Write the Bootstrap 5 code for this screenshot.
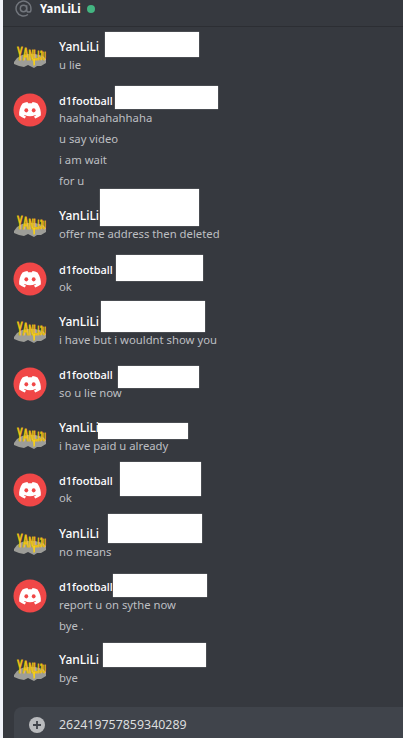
<!DOCTYPE html>
<html lang="en"><head><meta charset="utf-8">
<link rel="stylesheet" href="https://cdn.jsdelivr.net/npm/bootstrap@5.3.0/dist/css/bootstrap.min.css">
<style>
html,body{height:738px;overflow:hidden;background:#f1f3f9}
body{font-family:"Noto Sans",sans-serif;font-size:11.3px;color:#dcddde;padding-left:3px}
.chat-shell{height:738px;background:#36393f;overflow:hidden}
.chat-head{height:27px;padding:0 0 9px 12px;border-bottom:1px solid #2c2e33;font-size:11.5px}
.at-mark{width:17px;height:17px}
.head-name{font-weight:700;color:#fff;margin-left:8px}
.online-dot{width:8px;height:8px;border-radius:50%;background:#43b581;margin-left:6px}
.msg-list{padding:11px 0 0 10px}
.msg-group{position:relative;padding:0 0 17px 46px}
.pad-more{padding-bottom:18px}
.pad-less{padding-bottom:16px}
.avatar-slot{position:absolute;left:0;top:1px;width:34px;height:34px}
.user-name{height:18px;line-height:18px;color:#fff;font-weight:500;font-size:12px}
.name-alt{font-size:11px}
.name-short{height:17px}
.msg-line{height:18px;line-height:18px;color:#bdbfc2}
.msg-line+.msg-line{height:21px;line-height:24px}
.mask{position:absolute;background:#fff;box-shadow:0 0 1px rgba(255,255,255,.6)}
.m1{left:92px;top:-6px;width:94px;height:25px}
.m2{left:102px;top:-6px;width:103px;height:23px}
.m3{left:87px;top:-18px;width:99px;height:37px}
.m4{left:103px;top:-6px;width:87px;height:26px}
.m5{left:88px;top:-12px;width:104px;height:31px}
.m6{left:105px;top:0;width:81px;height:22px}
.m7{left:85px;top:4px;width:90px;height:16px}
.m8{left:107px;top:-10px;width:81px;height:34px}
.m9{left:95px;top:-11px;width:94px;height:29px}
.m10{left:100px;top:-4px;width:94px;height:23px}
.m11{left:90px;top:-8px;width:103px;height:24px}
.composer{position:absolute;left:11px;right:0;top:707px;height:44px;padding:10px 0 0 15px;background:#40444b;border-radius:8px 0 0 8px;color:#dcddde}
.plus-icon{width:16px;height:16px;margin-right:14px}
.composer-text{line-height:16px;font-size:12.4px}
</style></head><body>
<svg width="0" height="0" class="position-absolute"><defs>
<symbol id="yan" viewBox="0 0 34 34"><path d="M1 23 4 19 9 16 14 15 22 15 30 17 33 20 33 24 28 27 24 27 21 29 15 26 11 28 6 27 1 25Z" fill="#9d9d98"/><text transform="translate(4 21) scale(.47 1)" fill="#f5cf1a" stroke="#e6b80f" stroke-width=".9" font-family="Liberation Sans" font-weight="700"><tspan font-size="18">Y</tspan><tspan font-size="17">A</tspan><tspan font-size="15">N</tspan><tspan font-size="14">L</tspan><tspan font-size="13">I</tspan><tspan font-size="12">J</tspan><tspan font-size="10">U</tspan></text><path d="M20 20 22 20 22 26 20.500 27Z" fill="#f5cf1a"/></symbol>
<symbol id="disc" viewBox="0 0 34 34"><circle cx="17" cy="17" r="16.500" fill="#f04747"/><path d="M9.500 10.600c1.700-.8 3.400-1.300 5-1.500l.6 1.200c1.300-.2 2.600-.2 3.800 0l.6-1.200c1.700.2 3.400.7 5 1.500 2.700 4 3.700 7.900 3.300 12-1.900 1.400-3.800 2.300-5.600 2.800l-1.200-2c.7-.3 1.300-.6 1.900-1l-.5-.4c-3.500 1.600-7.300 1.600-10.800 0l-.5.400c.6.400 1.200.7 1.900 1l-1.200 2c-1.800-.5-3.700-1.400-5.600-2.800-.4-4.500.7-8.400 3.300-12Z" fill="#fff"/><ellipse cx="13.300" cy="17.300" rx="1.900" ry="2.100" fill="#f04747"/><ellipse cx="20.700" cy="17.300" rx="1.900" ry="2.100" fill="#f04747"/></symbol>
</defs></svg>
<main class="chat-shell position-relative">
<header class="chat-head d-flex align-items-center">
<svg class="at-mark" viewBox="0 0 24 24" fill="none" stroke="#72767d" stroke-width="2"><circle cx="12" cy="12" r="4.500"/><path d="M16.500 7.500v6.500a3 3 0 0 0 6 0v-2a10.500 10.500 0 1 0-4.200 8.400"/></svg>
<span class="head-name">YanLiLi</span><span class="online-dot"></span>
</header>
<section class="msg-list">
<article class="msg-group pad-more"><svg class="avatar-slot"><use href="#yan"/></svg><div class="user-name">YanLiLi</div><div class="msg-line">u lie</div><div class="mask m1"></div></article>
<article class="msg-group"><svg class="avatar-slot"><use href="#disc"/></svg><div class="user-name name-alt name-short">d1football</div><div class="msg-line">haahahahahhaha</div><div class="msg-line">u say video</div><div class="msg-line">i am wait</div><div class="msg-line">for u</div><div class="mask m2"></div></article>
<article class="msg-group pad-more"><svg class="avatar-slot"><use href="#yan"/></svg><div class="user-name">YanLiLi</div><div class="msg-line">offer me address then deleted</div><div class="mask m3"></div></article>
<article class="msg-group"><svg class="avatar-slot"><use href="#disc"/></svg><div class="user-name name-alt name-short">d1football</div><div class="msg-line">ok</div><div class="mask m4"></div></article>
<article class="msg-group"><svg class="avatar-slot"><use href="#yan"/></svg><div class="user-name">YanLiLi</div><div class="msg-line">i have but i wouldnt show you</div><div class="mask m5"></div></article>
<article class="msg-group"><svg class="avatar-slot"><use href="#disc"/></svg><div class="user-name name-alt">d1football</div><div class="msg-line">so u lie now</div><div class="mask m6"></div></article>
<article class="msg-group"><svg class="avatar-slot"><use href="#yan"/></svg><div class="user-name">YanLiLi</div><div class="msg-line">i have paid u already</div><div class="mask m7"></div></article>
<article class="msg-group pad-more"><svg class="avatar-slot"><use href="#disc"/></svg><div class="user-name name-alt name-short">d1football</div><div class="msg-line">ok</div><div class="mask m8"></div></article>
<article class="msg-group"><svg class="avatar-slot"><use href="#yan"/></svg><div class="user-name">YanLiLi</div><div class="msg-line">no means</div><div class="mask m9"></div></article>
<article class="msg-group pad-less"><svg class="avatar-slot"><use href="#disc"/></svg><div class="user-name name-alt">d1football</div><div class="msg-line">report u on sythe now</div><div class="msg-line">bye .</div><div class="mask m10"></div></article>
<article class="msg-group"><svg class="avatar-slot"><use href="#yan"/></svg><div class="user-name">YanLiLi</div><div class="msg-line">bye</div><div class="mask m11"></div></article>
</section>
<footer class="composer d-flex align-items-start">
<svg class="plus-icon" viewBox="0 0 16 16"><circle cx="8" cy="8" r="8" fill="#b9bbbe"/><path d="M8 4v8M4 8h8" stroke="#40444b" stroke-width="1.800"/></svg>
<span class="composer-text">262419757859340289</span>
</footer>
</main>
</body></html>
